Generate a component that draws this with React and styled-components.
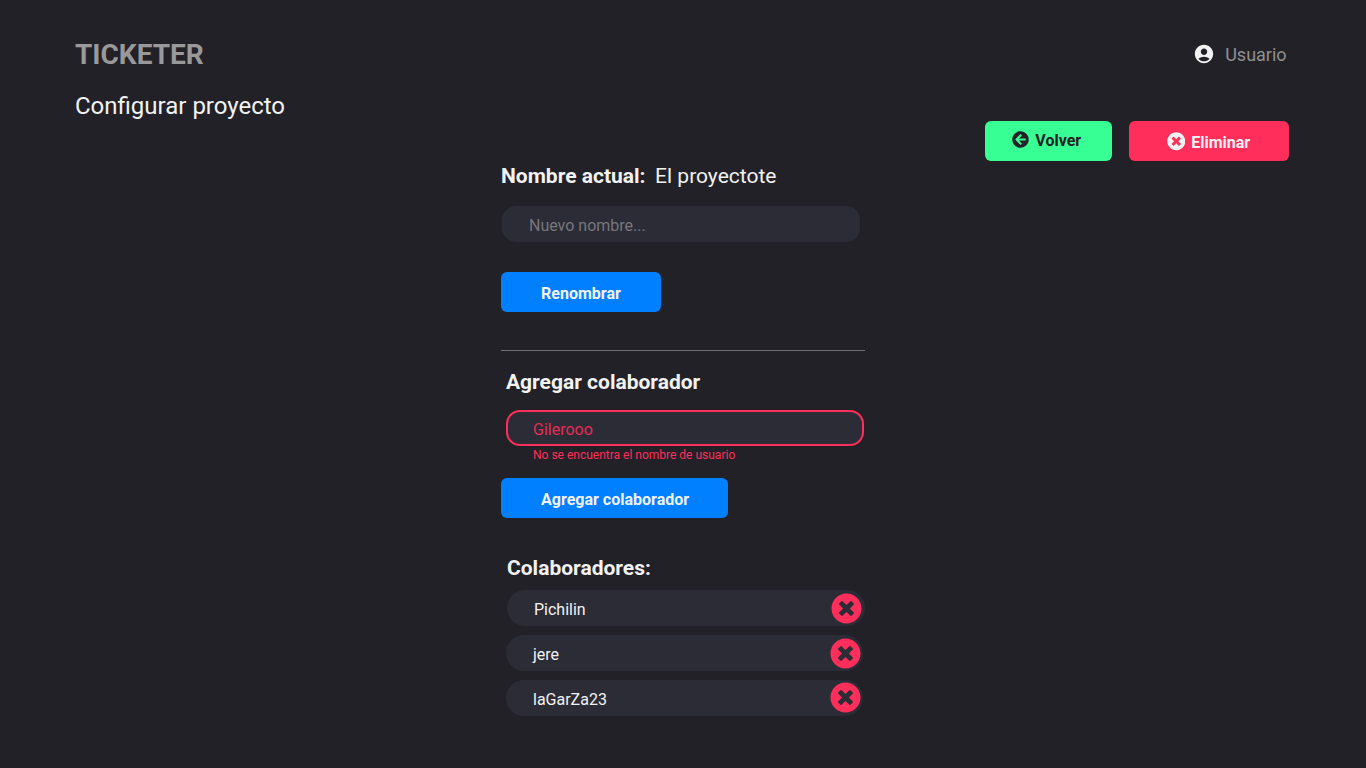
import React from 'react';
import styled, { createGlobalStyle } from 'styled-components';
import { FaArrowCircleLeft, FaTimesCircle } from 'react-icons/fa';
import { MdAccountCircle } from 'react-icons/md';

const GlobalStyle = createGlobalStyle`
  *, *::before, *::after { box-sizing: border-box; }
  body {
    margin: 0;
    background: #222127;
    color: #f2f2f2;
    font-family: Roboto, "Liberation Sans", sans-serif;
  }
  input, button { font-family: inherit; }
`;

const Page = styled.div`
  height: 768px;
  padding: 36px 77px 0 75px;
  overflow: hidden;
`;

const Header = styled.header`
  display: flex;
  justify-content: space-between;
  align-items: center;
  height: 36px;
`;

const Brand = styled.div`
  padding-top: 2px;
  font-size: 28px;
  font-weight: 700;
  line-height: 36px;
  color: #999999;
`;

const User = styled.div`
  display: flex;
  align-items: center;
  gap: 10.6px;
  padding-right: 2.4px;
  font-size: 18px;
  line-height: 36px;
  color: #8f8f91;

  svg { display: block; color: #f2f2f2; }
  span { padding-top: 1px; }
`;

const TitleBar = styled.div`
  display: flex;
  justify-content: space-between;
  height: 71px;
  margin-top: 18px;
`;

const Title = styled.h1`
  margin: 0;
  font-size: 24px;
  font-weight: 400;
  line-height: 32px;
`;

const Actions = styled.div`
  display: flex;
  align-items: flex-end;
  gap: 16.6px;
`;

const Button = styled.button`
  display: flex;
  align-items: center;
  justify-content: center;
  width: ${(p) => p.$width}px;
  height: 40px;
  padding: ${(p) => p.$padding || '4px 0 0'};
  border: 0;
  border-radius: 6px;
  background: ${(p) => p.$bg};
  color: ${(p) => p.$color || '#f2f2f2'};
  font-size: 16px;
  font-weight: 700;
  line-height: 20px;
  white-space: nowrap;

  svg { flex: none; margin: 0 6px 3px 0; }
`;

const Content = styled.main`
  width: 364px;
  margin-left: 426px;
`;

const CurrentName = styled.p`
  display: flex;
  gap: 9.6px;
  margin: 0 0 15px;
  font-size: 21px;
  line-height: 30px;
  white-space: nowrap;
`;

const Field = styled.input`
  display: block;
  width: 358px;
  height: 36px;
  margin-left: ${(p) => p.$indent}px;
  padding: ${(p) => (p.$error ? '2px 25px 0' : '2px 27px 0')};
  border: ${(p) => (p.$error ? '2px solid #ff2e5b' : '0')};
  border-radius: 14px;
  outline: 0;
  background: #2c2c36;
  color: ${(p) => (p.$error ? '#e52c55' : '#f2f2f2')};
  font-size: 16px;

  &::placeholder { color: #77777c; opacity: 1; }
`;

const FieldError = styled.p`
  margin: 0 0 14px;
  padding-left: 32px;
  font-size: 12px;
  line-height: 18px;
  color: #ff2e5b;
`;

const Rename = styled.div`
  padding: 30px 0 38px;
`;

const Divider = styled.hr`
  height: 1px;
  margin: 0;
  border: 0;
  background: #717075;
`;

const Heading = styled.h2`
  margin: 0;
  padding: ${(p) => p.$padding};
  font-size: 21px;
  font-weight: 700;
  line-height: 30px;
`;

const People = styled.ul`
  display: flex;
  flex-direction: column;
  gap: 9px;
  margin: 0;
  padding: 0;
  list-style: none;
`;

const Person = styled.li`
  display: flex;
  align-items: center;
  justify-content: space-between;
  width: ${(p) => p.$width}px;
  height: 36px;
  margin-left: ${(p) => p.$indent}px;
  padding: 0 ${(p) => p.$width - 355}px 0 27px;
  border-radius: 18px;
  background: #2c2c36;
  font-size: 16px;
  line-height: 20px;

  span { padding-top: 4px; }
`;

const Remove = styled.button`
  display: flex;
  padding: 0;
  margin-top: ${(p) => p.$shift}px;
  border: 0;
  background: none;
  color: #ff2e5b;
`;

const people = [
  { name: 'Pichilin', indent: 6, width: 358, shift: 1 },
  { name: 'jere', indent: 5, width: 357, shift: 1 },
  { name: 'laGarZa23', indent: 5, width: 357, shift: -1 },
];

export default function App() {
  return (
    <Page>
      <GlobalStyle />
      <Header>
        <Brand>TICKETER</Brand>
        <User>
          <MdAccountCircle size={22} />
          <span>Usuario</span>
        </User>
      </Header>
      <TitleBar>
        <Title>Configurar proyecto</Title>
        <Actions>
          <Button $width={127.4} $bg="#38ff94" $color="#222127" $padding="0 4px 0 0">
            <FaArrowCircleLeft size={17} />
            Volver
          </Button>
          <Button $width={160} $bg="#ff2e5b" $padding="4px 1px 0 0">
            <FaTimesCircle size={18.5} />
            Eliminar
          </Button>
        </Actions>
      </TitleBar>
      <Content>
        <CurrentName>
          <b>Nombre actual:</b>
          <span>El proyectote</span>
        </CurrentName>
        <Field $indent={1} placeholder="Nuevo nombre..." />
        <Rename>
          <Button $width={160} $bg="#0080ff">Renombrar</Button>
        </Rename>
        <Divider />
        <Heading $padding="16px 0 13px 5px">Agregar colaborador</Heading>
        <Field $indent={5} $error defaultValue="Gilerooo" />
        <FieldError>No se encuentra el nombre de usuario</FieldError>
        <Button $width={226.6} $bg="#0080ff" $padding="4px 0 0 1.6px">Agregar colaborador</Button>
        <Heading $padding="35px 0 7px 6px">Colaboradores:</Heading>
        <People>
          {people.map((p) => (
            <Person key={p.name} $indent={p.indent} $width={p.width}>
              <span>{p.name}</span>
              <Remove $shift={p.shift} aria-label="Eliminar colaborador">
                <FaTimesCircle size={31} />
              </Remove>
            </Person>
          ))}
        </People>
      </Content>
    </Page>
  );
}
